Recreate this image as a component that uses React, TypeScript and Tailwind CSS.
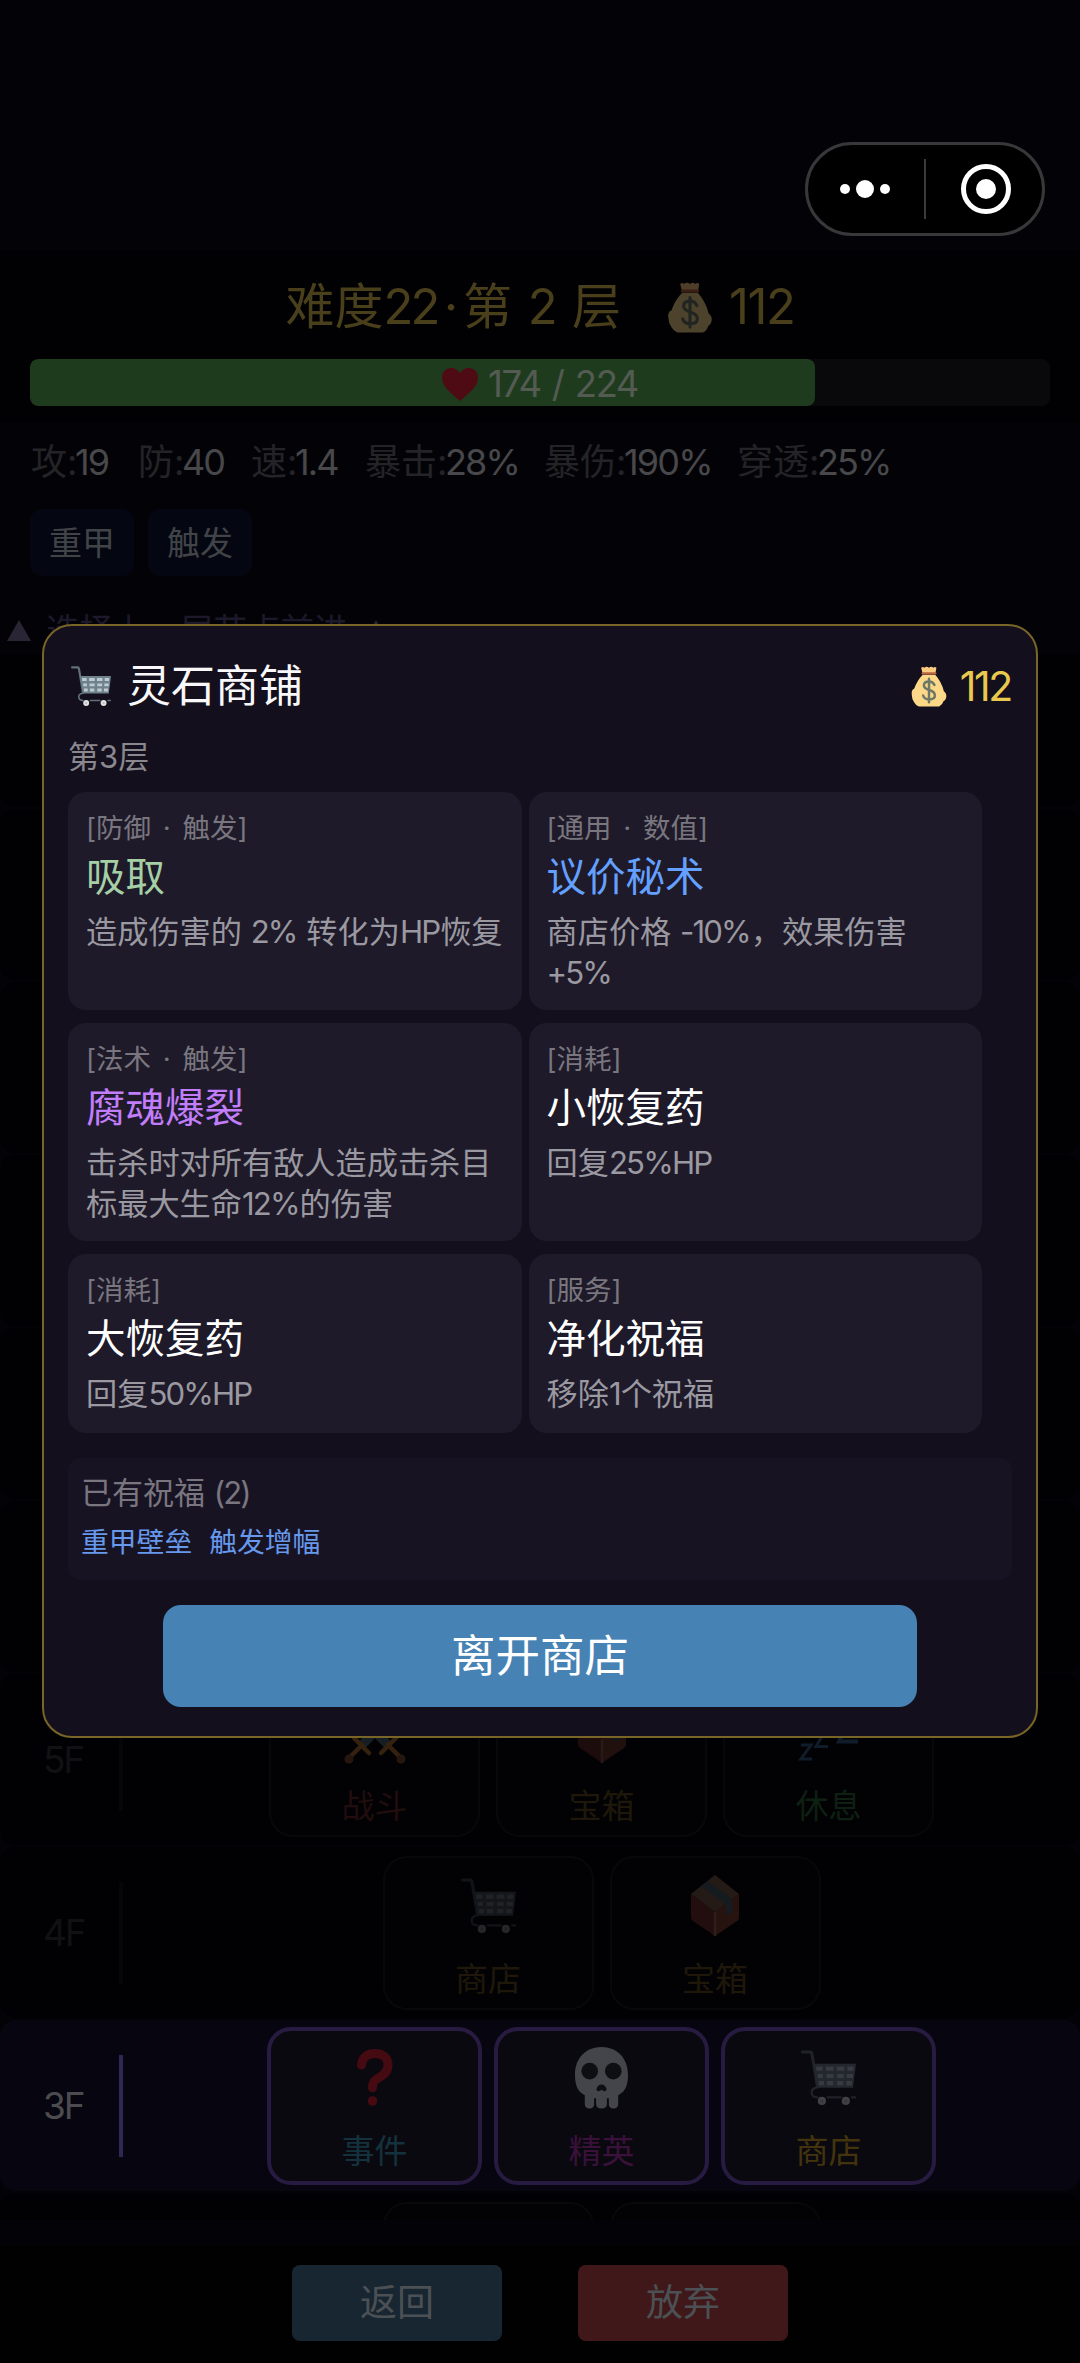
import React from "react";
import clsx from "clsx";

type IconProps = { className?: string };

function CartIcon({ className }: IconProps) {
  return (
    <svg viewBox="0 0 54 54" className={className} fill="none">
      <path
        d="M1.5 2h7.5q1.4 0 1.7 1.6L16 35"
        stroke="#607078"
        strokeWidth="3"
        strokeLinecap="round"
      />
      <path d="M12 13.5H54L51 37H16.5Z" fill="#6f818b" />
      <g stroke="#bccbd2" strokeWidth="4">
        <path d="M15 18.3h6M24.5 18.3h7.5M35 18.3h7.5M45.5 18.3h6" />
        <path d="M16.5 25.5h5M25 25.5h7M35.5 25.5h6.5M45 25.5h6" />
        <path d="M17.5 32.5h5M25.5 32.5h6M35.5 32.5h6M44.5 32.5h5.5" />
      </g>
      <path
        d="M17 36.5q-7 1-6.5 5.5 0 4.5 5.5 4.5M26 46.5H39M50 46.5H53"
        stroke="#607078"
        strokeWidth="2.2"
        strokeLinecap="round"
      />
      <circle cx="20.5" cy="50" r="4" fill="#e3e3e3" />
      <circle cx="44" cy="50" r="4" fill="#e3e3e3" />
      <circle cx="20.5" cy="50" r="1.5" fill="#b8bcbe" />
      <circle cx="44" cy="50" r="1.5" fill="#b8bcbe" />
    </svg>
  );
}

function MoneyBagIcon({ className }: IconProps) {
  return (
    <svg viewBox="0 0 46 52" className={className} fill="none">
      <path
        d="M13 2q2.5-2 4 0 3-2.5 6 0 3-2.5 5.5 0 2-1.8 4 0l-1.5 8H15Z"
        fill="#fcc980"
      />
      <path
        d="M15 11h16q8 9 11 21 4 3 3 8-1 4-3.5 5-1.5 5-5.5 6.5H10Q6 50 4 46 1 42 1 37q-1-4 1-7l2-1Q8 18 15 11Z"
        fill="#fdd889"
      />
      <path d="M15 9.2h16" stroke="#b9653d" strokeWidth="3" strokeLinecap="round" />
      <path
        d="M30 24q-2-4.5-7-4.5-6.5 0-6.5 5 0 4 6.5 6 7.5 2 7.5 7 0 5-7.5 5-6 0-7.5-5M23 16v30"
        stroke="#6d7867"
        strokeWidth="3.2"
        strokeLinecap="round"
      />
    </svg>
  );
}

function HeartIcon({ className }: IconProps) {
  return (
    <svg viewBox="0 0 36 33" className={className}>
      <path
        d="M18 33C9 25 0 19 0 9.5 0 4 4 0 9 0c4 0 7.5 2 9 5.5C19.5 2 23 0 27 0c5 0 9 4 9 9.5C36 19 27 25 18 33Z"
        fill="#4f0b14"
      />
    </svg>
  );
}

function QuestionIcon({ className }: IconProps) {
  return (
    <svg viewBox="0 0 36 57" className={className} fill="none">
      <path
        d="M4.5 16C5 9 10 4.5 18 4.5c8 0 13 4.5 13 11.500 0 6-3 9-7.500 11.800-5 3-8 4.200-8 11"
        stroke="#a00d17"
        strokeWidth="9"
        strokeLinecap="round"
      />
      <circle cx="15.5" cy="52" r="4.8" fill="#a00d17" />
    </svg>
  );
}

function SkullIcon({ className }: IconProps) {
  return (
    <svg viewBox="0 0 56 63" className={className}>
      <path
        d="M28 0C12 0 1 11.5 1 28c0 10 2 17 10 21v9q0 4.5 4.8 4.5T20.5 58v-6h2v6q0 4.5 5.5 4.5T33.5 58v-6h2v6q0 4.5 4.7 4.5T45 58v-9c8-4 10-11 10-21C55 11.5 44 0 28 0Z"
        fill="#9aa0a4"
      />
      <circle cx="16" cy="24.5" r="8.5" fill="#14191b" />
      <circle cx="40" cy="24.5" r="8.5" fill="#14191b" />
      <path
        d="M28 38q3.5 0 5 4 .5 3-2 3-1.5 0-3-1.5Q26.5 45 25 45q-2.5 0-2-3 1.5-4 5-4Z"
        fill="#14191b"
      />
    </svg>
  );
}

function BoxIcon({ className }: IconProps) {
  return (
    <svg viewBox="0 0 50 61" className={className}>
      <path d="M1 19 25 37V61L3 46Q1 45 1 42Z" fill="#6c2a26" />
      <path d="M49 19 25 37V61L47 46Q49 45 49 42Z" fill="#7a3a2e" />
      <path d="M25 0 49 19 25 37 1 19Z" fill="#735241" />
      <path d="M18 6 42 24V38L36 40V30L11 11Z" fill="#44575e" />
      <path d="M25 37V61" stroke="#96604a" strokeWidth="2.5" />
    </svg>
  );
}

function SwordsIcon({ className }: IconProps) {
  return (
    <svg viewBox="0 0 62 62" className={className} fill="none">
      <path d="M4 2 45 44M58 2 17 44" stroke="#557480" strokeWidth="9" />
      <g stroke="#c9802f" strokeWidth="4.5" strokeLinecap="round">
        <path d="M10 36 25 51M52 36 37 51M18 43 5 56M44 43 57 56" />
      </g>
      <circle cx="5" cy="57" r="4.5" fill="#96532a" />
      <circle cx="57" cy="57" r="4.5" fill="#96532a" />
    </svg>
  );
}

function SleepIcon({ className }: IconProps) {
  return (
    <svg viewBox="0 0 62 62" className={className} fill="none" stroke="#4f83c4">
      <path d="M3 43h10L3 57h11" strokeWidth="3" />
      <path d="M19 26h10L18 44.5h12" strokeWidth="3" />
      <path d="M38 6h19L41 39.5h19" strokeWidth="4" />
    </svg>
  );
}

// Latin runs sit tighter than the Chinese glyphs around them
function Mixed({
  text,
  tight = "tracking-[-0.06em] mr-[0.03em]",
}: {
  text: string;
  tight?: string;
}) {
  return (
    <>
      {text.split(/([\x21-\x7e]+)/).map((part, i) =>
        i % 2 ? (
          <span key={i} className={clsx("font-[Inter,sans-serif]", tight)}>
            {part}
          </span>
        ) : (
          part
        )
      )}
    </>
  );
}

const stats = [
  { label: "攻", value: "19", width: "w-[107px]" },
  { label: "防", value: "40", width: "w-[113px]" },
  { label: "速", value: "1.4", width: "w-[114px]" },
  { label: "暴击", value: "28%", width: "w-[179px]" },
  { label: "暴伤", value: "190%", width: "w-[193px]" },
  { label: "穿透", value: "25%", width: "w-[180px]" },
];

const goods = [
  { tag: "[防御 · 触发]", name: "吸取", desc: "造成伤害的 2% 转化为HP恢复", color: "text-[#a5d0a6]" },
  { tag: "[通用 · 数值]", name: "议价秘术", desc: "商店价格 -10%，效果伤害+5%", color: "text-[#64a0ff]" },
  { tag: "[法术 · 触发]", name: "腐魂爆裂", desc: "击杀时对所有敌人造成击杀目标最大生命12%的伤害", color: "text-[#c17dfa]" },
  { tag: "[消耗]", name: "小恢复药", desc: "回复25%HP", color: "text-white" },
  { tag: "[消耗]", name: "大恢复药", desc: "回复50%HP", color: "text-white" },
  { tag: "[服务]", name: "净化祝福", desc: "移除1个祝福", color: "text-white" },
];

type MapNode = {
  label: string;
  icon: React.ReactNode;
  color: string;
};

type Floor = {
  id: number;
  label?: string;
  active?: boolean;
  nodes: MapNode[];
};

const floors: Floor[] = [
  { id: 11, nodes: [] },
  { id: 10, nodes: [] },
  { id: 9, nodes: [] },
  { id: 8, nodes: [] },
  { id: 7, nodes: [] },
  { id: 6, nodes: [] },
  {
    id: 5,
    label: "5F",
    nodes: [
      { label: "战斗", icon: <SwordsIcon className="size-[62px] opacity-25" />, color: "text-[#210d0e]" },
      { label: "宝箱", icon: <BoxIcon className="h-[61px] w-[50px] opacity-25" />, color: "text-[#1f180a]" },
      { label: "休息", icon: <SleepIcon className="size-[62px] opacity-20" />, color: "text-[#0d2011]" },
    ],
  },
  {
    id: 4,
    label: "4F",
    nodes: [
      { label: "商店", icon: <CartIcon className="size-[55px] opacity-[0.16]" />, color: "text-[#1f180a]" },
      { label: "宝箱", icon: <BoxIcon className="h-[61px] w-[50px] opacity-30" />, color: "text-[#1f180a]" },
    ],
  },
  {
    id: 3,
    label: "3F",
    active: true,
    nodes: [
      { label: "事件", icon: <QuestionIcon className="h-[57px] w-9 opacity-40" />, color: "text-[#14313e]" },
      { label: "精英", icon: <SkullIcon className="h-[62px] w-[55px] opacity-40" />, color: "text-[#3a113a]" },
      { label: "商店", icon: <CartIcon className="size-[55px] opacity-25" />, color: "text-[#44340e]" },
    ],
  },
  {
    id: 2,
    nodes: [
      { label: "", icon: null, color: "" },
      { label: "", icon: null, color: "" },
    ],
  },
];

function Capsule() {
  return (
    <div className="flex h-[94px] w-60 items-center rounded-full border-[3px] border-[#38383a] bg-black">
      <div className="flex w-[116px] items-center justify-center gap-[6px] pr-[3px]">
        <span className="size-[10px] rounded-full bg-white" />
        <span className="size-[18px] rounded-full bg-white" />
        <span className="size-[10px] rounded-full bg-white" />
      </div>
      <span className="h-[60px] w-[2px] bg-[#3a3a3c]" />
      <div className="flex flex-1 items-center justify-center pl-[3px]">
        <span className="flex size-[50px] items-center justify-center rounded-full border-[5px] border-white">
          <span className="size-5 rounded-full bg-white" />
        </span>
      </div>
    </div>
  );
}

function FloorRow({ floor }: { floor: Floor }) {
  return (
    <div
      className={clsx(
        "flex h-[171px] shrink-0 items-center rounded-2xl",
        floor.active ? "bg-[#07050f]" : "bg-[#010103]"
      )}
    >
      <span
        className={clsx(
          "w-[119px] pl-[43px] text-[37px]",
          floor.active ? "text-[#4c4c50]" : "text-[#111113]"
        )}
      >
        {floor.label && <Mixed text={floor.label} />}
      </span>
      <span
        className={clsx(
          "h-[102px] w-[4px]",
          floor.active ? "bg-[#2e2855]" : "bg-[#060609]"
        )}
      />
      <div
        className={clsx(
          "flex flex-1 justify-center",
          floor.active ? "gap-3" : "gap-4"
        )}
      >
        {floor.nodes.map((node, i) => (
          <div
            key={i}
            className={clsx(
              "flex flex-col items-center rounded-[24px]",
              floor.active
                ? "h-[158px] w-[215px] border-4 border-[#281b42] bg-[#0a090f] pt-[13px]"
                : "h-[154px] w-[211px] border-2 border-[#08080b] bg-[#020204] pt-[14px]"
            )}
          >
            <div className="flex h-[68px] items-center justify-center">{node.icon}</div>
            <span
              className={clsx(
                "mt-[17px] text-[33px] leading-[44px]",
                node.color
              )}
            >
              {node.label}
            </span>
          </div>
        ))}
      </div>
    </div>
  );
}

function ShopDialog() {
  return (
    <div className="h-[1114px] w-[996px] rounded-[30px] border-2 border-[#786527] bg-[#130f1c] px-6 pt-[33px]">
      <div className="flex h-[54px] items-center justify-between">
        <div className="flex items-center gap-[16px] pl-[3px]">
          <CartIcon className="size-[40px]" />
          <h2 className="text-[44px] leading-[54px] text-[#f8f8fb]">灵石商铺</h2>
        </div>
        <div className="flex items-center gap-[13px] text-[#e8c84f]">
          <MoneyBagIcon className="h-[41px] w-9" />
          <span className="text-[41px] leading-[54px]">
            <Mixed text="112" />
          </span>
        </div>
      </div>
      <p className="mt-[22px] text-[31px] leading-[44px] text-[#8a878f]">
        <Mixed text="第3层" tight="" />
      </p>

      <div className="mt-[13px] grid w-[914px] grid-cols-2 grid-rows-[218px_218px_179px] gap-x-[7px] gap-y-[13px]">
        {goods.map((item) => (
          <div
            key={item.name}
            className="flex flex-col rounded-[18px] bg-[#1e1a29] pl-[18px] pr-[15px] pt-[18px]"
          >
            <span className="text-[27.5px] leading-[36px] text-[#79767f] [word-spacing:4px]">
              <Mixed text={item.tag} tight="" />
            </span>
            <span className={clsx("mt-[5px] text-[39.5px] leading-[52px]", item.color)}>
              {item.name}
            </span>
            <p className="mt-[9px] text-[31.2px] leading-[41px] text-[#9a98a0]">
              <Mixed text={item.desc} />
            </p>
          </div>
        ))}
      </div>

      <div className="mt-[25px] h-[122px] rounded-xl bg-[#181323] px-[13px] pt-[13px]">
        <p className="text-[31px] leading-[44px] text-[#79767f]">
          <Mixed text="已有祝福 (2)" />
        </p>
        <div className="mt-[7px] flex gap-[17px] text-[27.8px] leading-[40px] text-[#6698ec]">
          <span>重甲壁垒</span>
          <span>触发增幅</span>
        </div>
      </div>

      <button className="mx-auto mt-[25px] block h-[102px] w-[754px] rounded-[18px] bg-[#4682b4] text-[44.5px] text-white">
        离开商店
      </button>
    </div>
  );
}

export default function App() {
  return (
    <div className="relative flex h-[2363px] w-[1080px] flex-col overflow-hidden bg-[#030307] font-[Inter,'Noto_Sans_CJK_SC',sans-serif]">
      <div className="flex h-[251px] shrink-0 items-end justify-end pb-[15px] pr-[35px]">
        <Capsule />
      </div>

      <header className="h-[171px] shrink-0 bg-[#010103] px-[30px] pt-7">
        <div className="flex h-14 items-center justify-center text-[49px] leading-[56px] text-[#4a3f1b]">
          <span className="whitespace-pre [word-spacing:2px]">
            <Mixed text="难度22" />
            <span className="mx-[5px]">·</span>
            <Mixed text="第 2 层" />
          </span>
          <MoneyBagIcon className="ml-[46px] h-[51px] w-[46px] opacity-30" />
          <span className="ml-[16px]">
            <Mixed text="112" tight="tracking-[-0.03em]" />
          </span>
        </div>
        <div className="relative mt-6 h-[47px] overflow-hidden rounded-lg bg-[#09090b]">
          <div className="h-full w-[77%] rounded-lg bg-[#1f3b1e]" />
          <div className="absolute inset-0 flex items-center justify-center gap-[10px] text-[36.5px] text-[#535b53]">
            <HeartIcon className="mt-1 h-[33px] w-9" />
            <span className="mt-1 [word-spacing:1px]">
              <Mixed text="174 / 224" tight="tracking-[-0.04em]" />
            </span>
          </div>
        </div>
      </header>

      <section className="h-[233px] shrink-0 pt-[18px]">
        <div className="flex pl-[31px] text-[36px] leading-[44px]">
          {stats.map((s) => (
            <div key={s.label} className={clsx("shrink-0 whitespace-nowrap", s.width)}>
              <span className="text-[#242427]">
                {s.label}
                <span className="tracking-[-0.07em]">:</span>
              </span>
              <span className="tracking-[-0.05em] text-[#48484b]">{s.value}</span>
            </div>
          ))}
        </div>
        <div className="mt-[25px] flex gap-[14px] pl-[30px] text-[33px] leading-[68px] text-[#414447]">
          <span className="h-[67px] w-[104px] rounded-xl bg-[#040612] text-center">重甲</span>
          <span className="h-[67px] w-[104px] rounded-xl bg-[#040612] text-center">触发</span>
        </div>
        <div className="mt-[31px] flex items-center text-[33.5px] leading-[46px] text-[#1d182b]">
          <svg viewBox="0 0 24 21" className="ml-[7px] h-[21px] w-6">
            <path d="M12 0 24 21H0Z" fill="#2a2535" />
          </svg>
          <span className="ml-[15px]">选择上一层节点前进</span>
          <svg viewBox="0 0 24 21" className="ml-[16px] h-[21px] w-6">
            <path d="M12 0 24 21H0Z" fill="#2a2535" />
          </svg>
        </div>
      </section>

      <main className="h-[1565px] shrink-0 overflow-hidden">
        <div className="-mt-[19px] flex flex-col gap-[2px]">
          {floors.map((floor) => (
            <FloorRow key={floor.id} floor={floor} />
          ))}
        </div>
      </main>

      <footer className="mt-[25px] flex h-[118px] shrink-0 justify-center gap-[76px] bg-[#010102] pt-5 text-[37px] text-[#4b5054]">
        <button className="h-[76px] w-[210px] rounded-lg bg-[#182632]">返回</button>
        <button className="h-[76px] w-[210px] rounded-lg bg-[#401819]">放弃</button>
      </footer>

      <div className="absolute inset-0 flex items-start justify-center pt-[624px]">
        <ShopDialog />
      </div>
    </div>
  );
}
